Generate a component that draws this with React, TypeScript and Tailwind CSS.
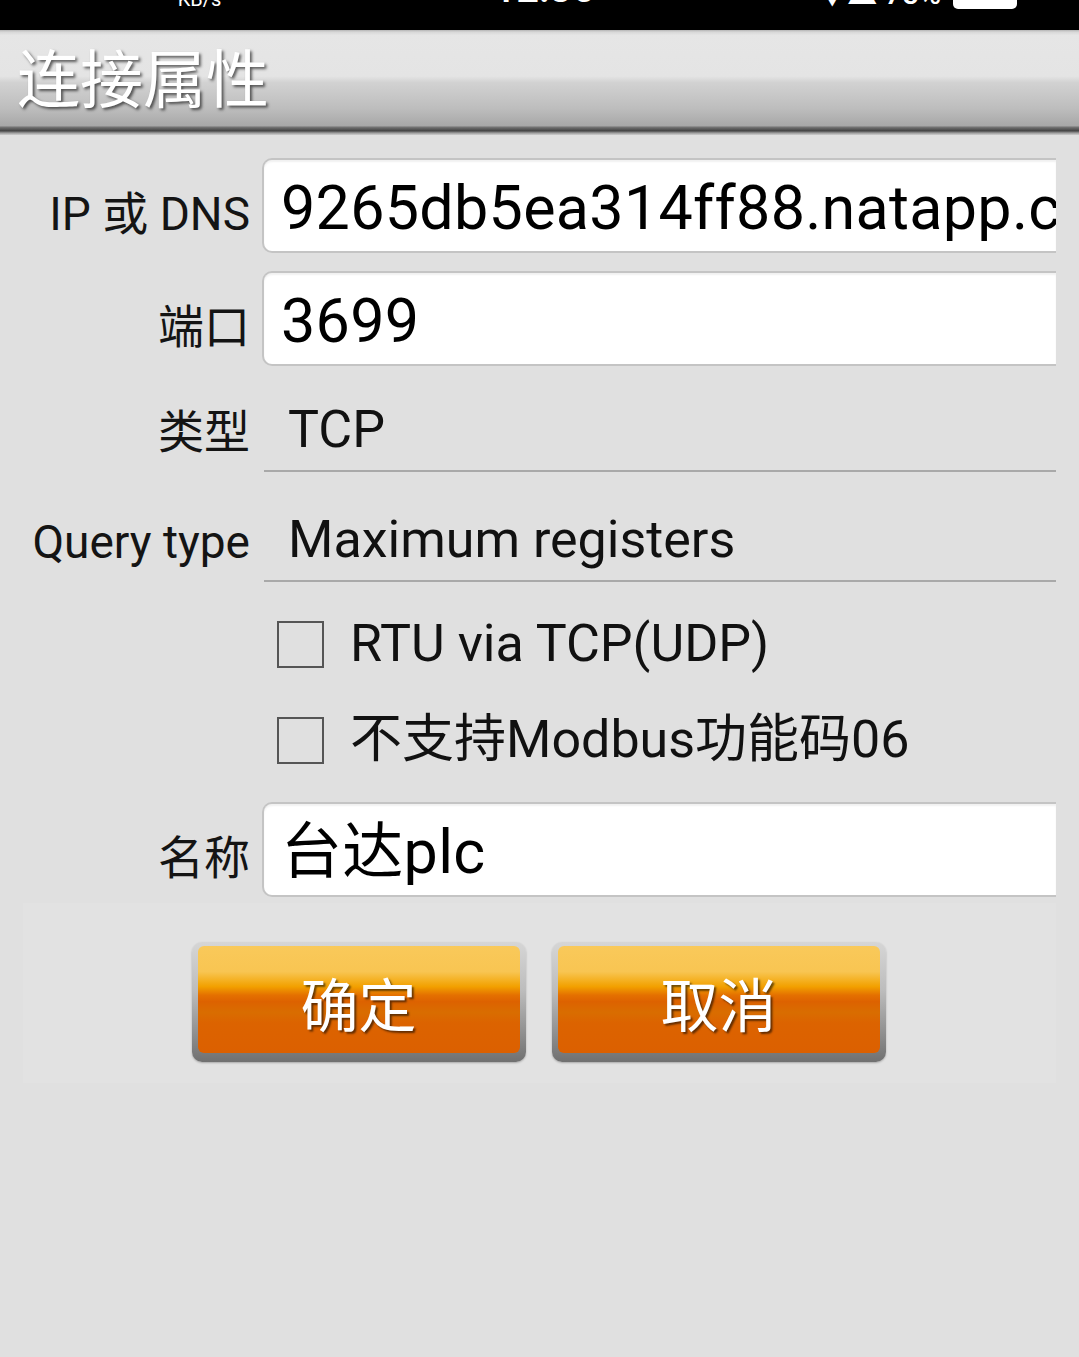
import React from "react";

const FONT = { fontFamily: 'Roboto, "Noto Sans CJK SC", "Noto Sans", sans-serif' };

function Label({ children }: { children: React.ReactNode }) {
  return (
    <div className="w-[227px] shrink-0 text-right text-[46px] leading-none text-[#141414] pt-[16px] whitespace-nowrap">
      {children}
    </div>
  );
}

function InputRow({ label, value, className }: { label: string; value: string; className?: string }) {
  return (
    <div className={"flex items-center gap-[12px] " + (className ?? "")}>
      <Label>{label}</Label>
      <div className="flex-1 min-w-0 h-[95px] bg-white border-y-2 border-l-2 border-[#c4c4c4] rounded-l-[10px] overflow-hidden flex items-center pl-[17px] shadow-[inset_0_2px_2px_rgba(0,0,0,0.06)]">
        <span className="text-[61px] leading-none text-black whitespace-nowrap pt-[6px] tracking-[0.3px]">{value}</span>
      </div>
    </div>
  );
}

function SpinnerRow({ label, value, className }: { label: string; value: string; className?: string }) {
  return (
    <div className={"flex items-center gap-[12px] " + (className ?? "")}>
      <Label>{label}</Label>
      <div className="flex-1 min-w-0 h-[96px] border-b-2 border-[#a9a9a9] flex items-center pl-[24px] pt-[14px] ml-[2px]">
        <span className="text-[52px] leading-none text-[#111] whitespace-nowrap">{value}</span>
      </div>
    </div>
  );
}

function CheckRow({ text }: { text: string }) {
  return (
    <div className="flex items-center h-[96px] pl-[254px] pt-[4px]">
      <div className="w-[47px] h-[47px] border-2 border-[#555] shrink-0" />
      <span className="ml-[26px] text-[52px] leading-none text-[#111] whitespace-nowrap">{text}</span>
    </div>
  );
}

function OrangeButton({ text }: { text: string }) {
  return (
    <div className="w-[334px] h-[120px] rounded-[10px] bg-[linear-gradient(to_bottom,#d6d6d6_0%,#bdbdbd_40%,#8a8a8a_80%,#707070_100%)] pt-[4px] px-[6px] pb-[9px] shadow-[0_1px_2px_rgba(0,0,0,0.25)]">
      <div className="w-full h-full rounded-[6px] flex items-center justify-center bg-[linear-gradient(to_bottom,#f9c95a_0%,#f8c552_24%,#f4ae1c_33%,#f2a000_38%,#e47000_46%,#dd6200_52%,#d96d00_62%,#dc6300_72%,#dc6000_100%)]">
        <span
          className="text-white text-[58px] leading-none [text-shadow:2px_2px_2px_rgba(0,0,0,0.55)] pt-[4px]"
          style={{ fontFamily: '"Noto Sans CJK SC", sans-serif' }}
        >
          {text}
        </span>
      </div>
    </div>
  );
}

export default function App() {
  return (
    <div className="w-[1079px] h-[1357px] bg-[#e0e0e0] overflow-hidden flex flex-col" style={FONT}>
      {/* status bar */}
      <div className="h-[30px] bg-black overflow-hidden shrink-0">
        <div className="flex items-end justify-between h-[30px] -mt-[21px] pl-[58px] pr-[62px] text-white text-[30px] leading-none">
          <div className="flex items-end gap-[8px]">
            <span className="tracking-[2px] font-bold">•••• ••••</span>
            <span className="text-[20px]">KB/s</span>
          </div>
          <span className="font-medium ml-[50px] text-[40px]">12:35</span>
          <div className="flex items-end gap-[12px]">
            <span className="font-medium">▼▲ 75%</span>
            <div className="w-[64px] h-[22px] bg-white rounded-[5px]" />
          </div>
        </div>
      </div>

      {/* header */}
      <div className="h-[105px] shrink-0 flex items-center pl-[17px] bg-[linear-gradient(to_bottom,#b5b5b5_0%,#d8d8d8_2%,#e6e6e6_5%,#e4e4e4_44%,#d2d2d2_50%,#bdbdbd_75%,#a8a8a8_91%,#6c6c6c_93%,#444_96%,#9a9a9a_98%,#cfcfcf_100%)]">
        <span
          className="text-white text-[63px] leading-none [text-shadow:2px_2px_3px_rgba(0,0,0,0.6)] -mt-[16px]"
          style={{ fontFamily: '"Noto Sans CJK SC", sans-serif' }}
        >
          连接属性
        </span>
      </div>

      {/* form */}
      <div className="ml-[23px] w-[1033px] pt-[23px] flex flex-col">
        <InputRow label="IP 或 DNS" value="9265db5ea314ff88.natapp.cc" />
        <InputRow label="端口" value="3699" className="mt-[18px]" />
        <SpinnerRow label="类型" value="TCP" className="mt-[10px]" />
        <SpinnerRow label="Query type" value="Maximum registers" className="mt-[14px]" />
        <div className="mt-[12px]">
          <CheckRow text="RTU via TCP(UDP)" />
          <CheckRow text="不支持Modbus功能码06" />
        </div>
        <InputRow label="名称" value="台达plc" className="mt-[16px]" />

        <div className="mt-[6px] h-[180px] bg-[#e2e2e2] flex items-start justify-center gap-[26px] pt-[39px] pr-[2px]">
          <OrangeButton text="确定" />
          <OrangeButton text="取消" />
        </div>
      </div>
    </div>
  );
}
